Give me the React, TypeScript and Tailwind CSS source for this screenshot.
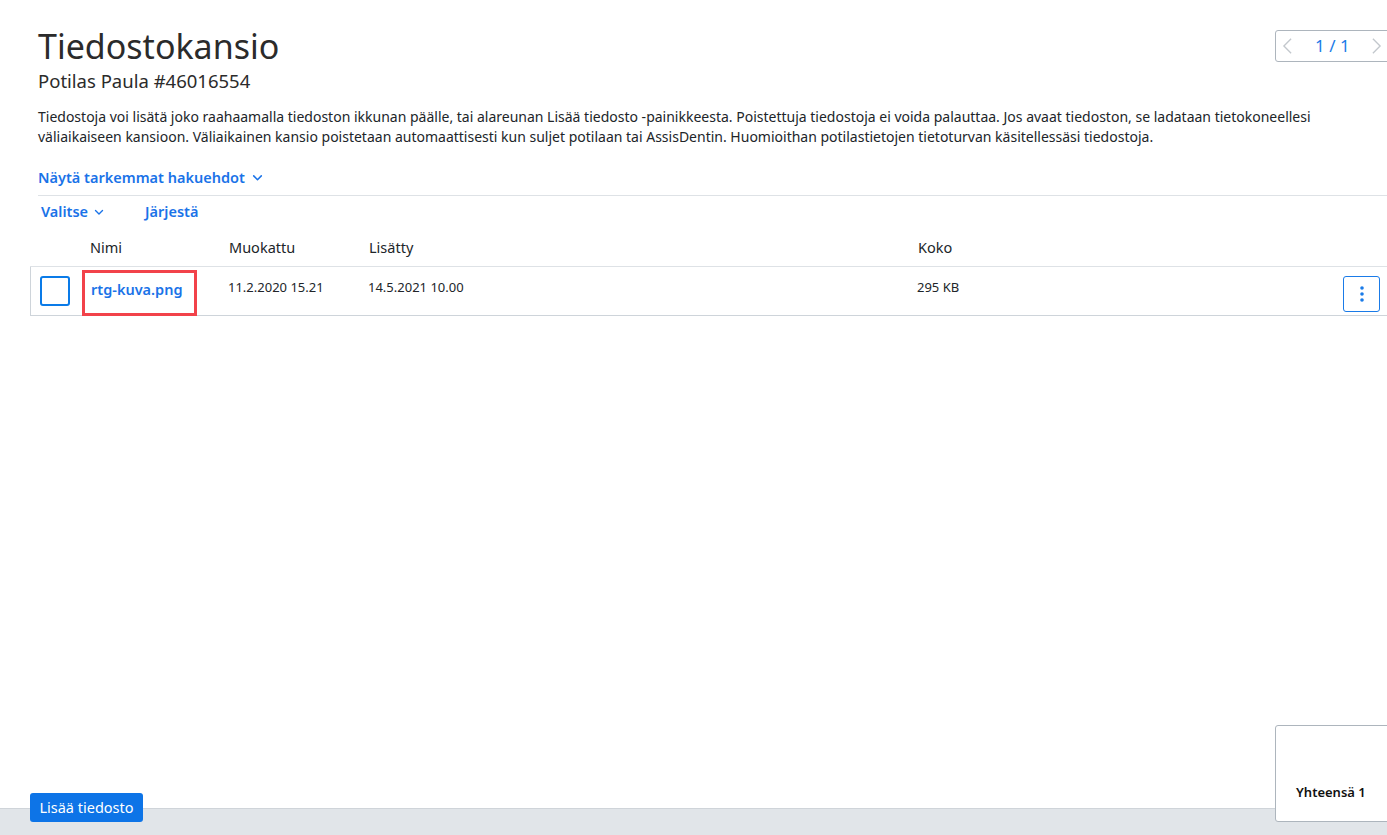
import React from "react";

const font = { fontFamily: '"Noto Sans", "Open Sans", sans-serif' };

function ChevronDown({ className = "" }: { className?: string }) {
  return (
    <svg viewBox="0 0 12 12" className={className} fill="none" stroke="currentColor" strokeWidth="1.4" strokeLinecap="round" strokeLinejoin="round">
      <path d="M2.5 4.5 L6 8 L9.5 4.5" />
    </svg>
  );
}

export default function App() {
  return (
    <div className="relative flex h-[835px] w-full flex-col overflow-hidden bg-white text-[#212529]" style={font}>
      <div className="flex-1 pt-[24px]">
        <div className="flex items-start pl-[38px]">
          <div className="flex-1">
            <h1 className="text-[34px] leading-[44px] font-normal text-[#2b2b2b]">Tiedostokansio</h1>
            <div className="text-[18.5px] leading-[26px] text-[#2b2b2b]">Potilas Paula #46016554</div>
          </div>
          <div className="mt-[6px] mr-[-20px] flex h-[32px] w-[132px] shrink-0 items-center rounded-[3px] border border-[#adb5bd] px-[6px]">
            <svg viewBox="0 0 12 20" className="h-[18px] w-[11px] text-[#c3c8cd]" fill="none" stroke="currentColor" strokeWidth="1.5"><path d="M10 2 L2 10 L10 18" /></svg>
            <span className="ml-[22px] text-[17px] text-[#1a7be8]">1 / 1</span>
            <svg viewBox="0 0 12 20" className="ml-[21px] h-[18px] w-[11px] text-[#c3c8cd]" fill="none" stroke="currentColor" strokeWidth="1.5"><path d="M2 2 L10 10 L2 18" /></svg>
          </div>
        </div>

        <p className="mt-[13px] pl-[38px] text-[14px] leading-[20px] text-[#212529]">
          Tiedostoja voi lisätä joko raahaamalla tiedoston ikkunan päälle, tai alareunan Lisää tiedosto -painikkeesta. Poistettuja tiedostoja ei voida palauttaa. Jos avaat tiedoston, se ladataan tietokoneellesi
          <br />
          väliaikaiseen kansioon. Väliaikainen kansio poistetaan automaattisesti kun suljet potilaan tai AssisDentin. Huomioithan potilastietojen tietoturvan käsitellessäsi tiedostoja.
        </p>

        <div className="mt-[20px] ml-[38px] flex items-center gap-[6px] pb-[6px] text-[14.5px] font-semibold text-[#1a73e8]">
          <span>Näytä tarkemmat hakuehdot</span>
          <ChevronDown className="h-[13px] w-[13px]" />
        </div>
        <div className="ml-[38px] border-t border-[#dee2e6]" />

        <div className="ml-[41px] mt-[5px] flex items-center text-[14.5px] font-semibold text-[#1a73e8]">
          <span>Valitse</span>
          <ChevronDown className="ml-[5px] h-[12px] w-[12px]" />
          <span className="ml-[40px]">Järjestä</span>
        </div>

        <div className="ml-[30px] mt-[8px] mr-[-20px]">
          <div className="flex h-[36px] items-center border-b border-[#dee2e6] text-[14.5px] text-[#212529]">
            <div className="w-[52px] shrink-0" />
            <div className="w-[139px] shrink-0 pl-[8px]">Nimi</div>
            <div className="w-[140px] shrink-0 pl-[8px]">Muokattu</div>
            <div className="w-[549px] shrink-0 pl-[8px]">Lisätty</div>
            <div className="flex-1 pl-[8px]">Koko</div>
          </div>
          <div className="flex h-[49px] border-b border-l border-[#ced4da]">
            <div className="w-[51px] shrink-0 pl-[9px] pt-[9px]">
              <div className="h-[30px] w-[30px] rounded-[3px] border-2 border-[#0a7be8]" />
            </div>
            <div className="w-[139px] shrink-0 pt-[3px]">
              <div className="flex h-[46px] w-[115px] items-start border-[3px] border-[#f2424a] pl-[6px] pt-[6px] text-[14.5px] font-semibold text-[#1a73e8]">
                rtg-kuva.png
              </div>
            </div>
            <div className="w-[140px] shrink-0 pl-[7px] pt-[11px] text-[13px]">11.2.2020 15.21</div>
            <div className="w-[549px] shrink-0 pl-[7px] pt-[11px] text-[13px]">14.5.2021 10.00</div>
            <div className="flex flex-1 justify-between pl-[7px] pt-[11px] text-[13px]">
              <span>295 KB</span>
              <div className="mr-[27px] mt-[-2px] flex h-[36px] w-[37px] items-center justify-center rounded-[3px] border border-[#1a7be8]">
                <svg viewBox="0 0 4 16" className="h-[16px] w-[4px] text-[#1a7be8]" fill="currentColor">
                  <circle cx="2" cy="2" r="1.8" />
                  <circle cx="2" cy="8" r="1.8" />
                  <circle cx="2" cy="14" r="1.8" />
                </svg>
              </div>
            </div>
          </div>
        </div>
      </div>

      <div className="h-[27px] shrink-0 border-t border-[#cfd4d9] bg-[#e1e5e9]" />

      <button className="absolute left-[30px] top-[793px] h-[29px] w-[113px] rounded-[3px] bg-[#0d74e7] text-[14.5px] text-white">
        Lisää tiedosto
      </button>
      <div className="absolute left-[1275px] top-[725px] flex h-[97px] w-[130px] items-end rounded-[3px] border border-[#adb5bd] bg-white pb-[19px] pl-[20px] text-[13px] font-semibold text-[#111]">
        Yhteensä 1
      </div>
    </div>
  );
}
